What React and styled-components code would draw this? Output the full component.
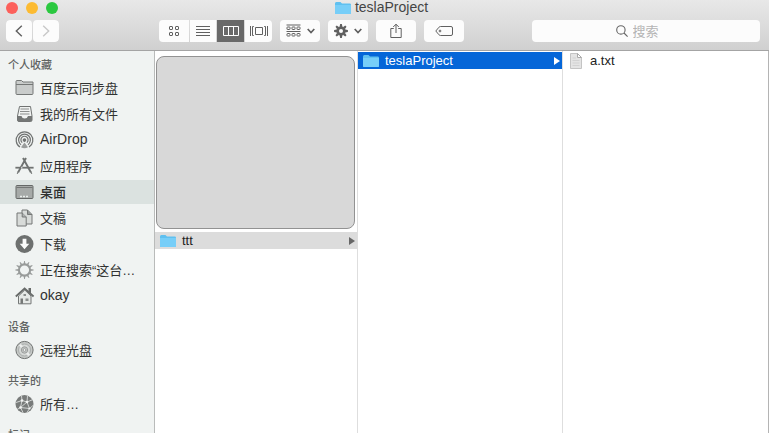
import React, { useState } from 'react'
import styled, { createGlobalStyle, css } from 'styled-components'

const GlobalStyle = createGlobalStyle`
  * {
    box-sizing: border-box;
  }

  body {
    margin: 0;
    overflow: hidden;
    font-family: 'Liberation Sans', 'Noto Sans CJK SC', sans-serif;
    font-size: 13px;
    color: #222;
  }

  button, input {
    font-family: inherit;
  }
`

const Window = styled.div`
  display: flex;
  flex-direction: column;
  height: 100vh;
  background: white;
`

const Header = styled.header`
  flex: none;
  background: linear-gradient(#e8e8e8, #d0d0d0);
  border-bottom: 1px solid #a4a4a4;
`

const TitleBar = styled.div`
  display: grid;
  grid-template-columns: 1fr auto 1fr;
  align-items: center;
  height: 15px;
  padding: 0 12px 0 6px;
`

const Lights = styled.div`
  display: flex;
  gap: 8px;
`

const Light = styled.button`
  width: 12px;
  height: 12px;
  padding: 0;
  border: none;
  border-radius: 50%;
  background: ${(props) => props.$color};
`

const Title = styled.h1`
  display: flex;
  align-items: center;
  gap: 4px;
  margin: 0;
  font-size: 14px;
  font-weight: 400;
  line-height: 15px;
  color: #444;
`

const Toolbar = styled.div`
  display: flex;
  align-items: center;
  gap: 8px;
  padding: 5px 9px 8px 6px;
`

const ButtonGroup = styled.div`
  display: flex;
  gap: 1px;
  margin-right: ${(props) => (props.$spaced ? 92 : 0)}px;
  border-radius: 4px;
  overflow: hidden;
`

const ToolButton = styled.button`
  display: flex;
  align-items: center;
  justify-content: center;
  gap: 6px;
  width: ${(props) => props.$width}px;
  height: 22px;
  padding: 0;
  border: none;
  border-radius: ${(props) => (props.$flat ? 0 : 4)}px;
  background: ${(props) => (props.$active ? '#696969' : '#fcfcfc')};
  color: ${(props) => (props.$active ? '#fff' : '#606060')};

  &:disabled {
    color: #c8c8c8;
  }
`

const SearchBox = styled.label`
  display: flex;
  align-items: center;
  justify-content: center;
  gap: 5px;
  flex: 1;
  height: 22px;
  margin-left: 60px;
  border-radius: 4px;
  background: #fcfcfc;
  color: #666;
`

const SearchInput = styled.input`
  width: 44px;
  padding: 0;
  border: none;
  outline: none;
  background: none;
  font-size: 13px;

  &::placeholder {
    color: #b4b4b4;
    opacity: 1;
  }
`

const Body = styled.div`
  display: flex;
  flex: 1;
  min-height: 0;
`

const Sidebar = styled.nav`
  flex: none;
  width: 155px;
  padding-top: 5px;
  overflow: hidden;
  background: #f0f3f2;
  border-right: 1px solid #b9bbba;
`

const Section = styled.section`
  margin-bottom: 10px;
`

const SectionTitle = styled.h2`
  margin: 0;
  padding-left: 8px;
  font-size: 11px;
  font-weight: 500;
  line-height: 18px;
  color: #606362;
`

const SideItem = styled.a`
  display: flex;
  align-items: center;
  gap: 5px;
  height: 24px;
  margin: 2px 0;
  padding-left: 15px;
  font-size: ${(props) => (props.$latin ? 14 : 13)}px;
  font-weight: ${(props) => (props.$selected ? 500 : 400)};
  color: #303231;
  text-decoration: none;
  white-space: nowrap;
  background: ${(props) => (props.$selected ? '#dbe2e0' : 'transparent')};

  svg {
    flex: none;
  }
`

const SideLabel = styled.span`
  padding-bottom: 2px;
`

const Columns = styled.main`
  display: grid;
  grid-template-columns: 203fr 205fr 206fr;
  flex: 1;
`

const Column = styled.div`
  padding-top: 1px;
  border-right: 1px solid ${(props) => (props.$last ? '#b4b4b4' : '#dedede')};
`

const Placeholder = styled.div`
  height: 173px;
  margin: 4px 2px 3px 1px;
  border: 1px solid #929292;
  border-radius: 8px;
  background: #d8d8d8;
`

const highlights = {
  active: css`
    background: #0566d8;
    color: white;
  `,
  inactive: css`
    background: #dcdcdc;
  `
}

const FileRow = styled.a`
  display: flex;
  align-items: center;
  gap: 6px;
  height: 17px;
  padding: 0 2px 0 5px;
  color: #222;
  text-decoration: none;
  ${(props) => highlights[props.$highlight]}
`

const FileName = styled.span`
  flex: 1;
`

const Arrow = styled.svg`
  color: ${(props) => (props.$light ? '#fff' : '#666')};
`

function FolderIcon() {
  return (
    <svg width="16" height="14" viewBox="0 0 16 14">
      <path d="M0 2.5Q0 1 1.3 1H5.5L7 2.5H14.8Q16 2.5 16 3.7V12Q16 13 15 13H1Q0 13 0 12Z" fill="#5fc0f0" />
      <path d="M0 4H16V12Q16 13 15 13H1Q0 13 0 12Z" fill="#77cef8" />
    </svg>
  )
}

function FileIcon() {
  return (
    <svg width="16" height="16" viewBox="0 0 16 16">
      <path d="M2.5.5H9.5L13.5 4.5V15.5H2.5Z" fill="#e4e4e4" stroke="#c4c4c4" />
      <path d="M9.5.5V4.5H13.5Z" fill="#fff" stroke="#aaa" />
      <path d="M4.5 5H8M4.5 7.5H11.5M4.5 10H11.5M4.5 12.5H11.5" stroke="#d2d2d2" />
    </svg>
  )
}

function Chevron() {
  return (
    <svg width="8" height="6" viewBox="0 0 8 6" fill="none" stroke="currentColor" strokeWidth="1.7">
      <path d="M.7 1L4 4.5L7.3 1" />
    </svg>
  )
}

const toothAngles = (count) => Array.from({ length: count }, (_, i) => (i * 360) / count)

function NavIcon({ forward }) {
  return (
    <svg width="8" height="12" viewBox="0 0 8 12" fill="none" stroke="currentColor" strokeWidth="1.4">
      <path d={forward ? 'M1.2.7L6.7 6L1.2 11.3' : 'M6.8.7L1.3 6L6.8 11.3'} />
    </svg>
  )
}

function GridIcon() {
  return (
    <svg width="12" height="12" viewBox="0 0 12 12" fill="none" stroke="currentColor">
      <rect x="1.5" y="1.5" width="3" height="3" rx=".5" />
      <rect x="7.5" y="1.5" width="3" height="3" rx=".5" />
      <rect x="1.5" y="7.5" width="3" height="3" rx=".5" />
      <rect x="7.5" y="7.5" width="3" height="3" rx=".5" />
    </svg>
  )
}

function ListIcon() {
  return (
    <svg width="14" height="12" viewBox="0 0 14 12" stroke="currentColor">
      <path d="M0 1.5H14M0 4.5H14M0 7.5H14M0 10.5H14" />
    </svg>
  )
}

function ColumnsIcon() {
  return (
    <svg width="16" height="12" viewBox="0 0 16 12" fill="none" stroke="currentColor">
      <path d="M.5 1.5H15.5V10.5H.5ZM5.5 1.5V10.5M10.5 1.5V10.5" />
    </svg>
  )
}

function CoverIcon() {
  return (
    <svg width="18" height="12" viewBox="0 0 18 12" fill="none" stroke="currentColor">
      <path d="M5.5 2.5H12.5V9.5H5.5ZM.5 1V11M3.8 1.5H2.5V10.5H3.8M17.5 1V11M14.2 1.5H15.5V10.5H14.2" />
    </svg>
  )
}

function ArrangeIcon() {
  return (
    <svg width="15" height="14" viewBox="0 0 15 14" fill="none" stroke="currentColor">
      <path d="M.5 1H14.5M.5 7.5H14.5" />
      {[1, 6, 11].map((x) => (
        <g key={x}>
          <rect x={x} y="3" width="3" height="2.5" rx=".5" />
          <rect x={x} y="9.5" width="3" height="2.5" rx=".5" />
        </g>
      ))}
    </svg>
  )
}

function GearIcon() {
  return (
    <svg width="14" height="14" viewBox="0 0 14 14">
      {toothAngles(8).map((angle) => (
        <path key={angle} d="M5.6 3L6.1.1H7.9L8.4 3Z" fill="currentColor" transform={`rotate(${angle} 7 7)`} />
      ))}
      <circle cx="7" cy="7" r="3.3" fill="none" stroke="currentColor" strokeWidth="2.6" />
    </svg>
  )
}

function ShareIcon() {
  return (
    <svg width="12" height="16" viewBox="0 0 12 16" fill="none" stroke="currentColor">
      <path d="M3.8 5.5H.8V14.5H11.2V5.5H8.2M6 10V1.2M3.2 4L6 1.2L8.8 4" />
    </svg>
  )
}

function TagIcon() {
  return (
    <svg width="18" height="12" viewBox="0 0 18 12" fill="none" stroke="currentColor">
      <path d="M5.5 1.5H16Q17.5 1.5 17.5 3V9Q17.5 10.5 16 10.5H5.5Q4.7 10.5 4 9.8L.8 6L4 2.2Q4.7 1.5 5.5 1.5Z" />
      <circle cx="5" cy="6" r=".9" />
    </svg>
  )
}

function SearchIcon() {
  return (
    <svg width="12" height="12" viewBox="0 0 12 12" fill="none" stroke="currentColor" strokeWidth="1.1">
      <circle cx="4.9" cy="4.9" r="4.2" />
      <path d="M8 8L11.6 11.6" />
    </svg>
  )
}

const sideIcons = {
  folder: (
    <g fill="#c9cccb" stroke="#747776">
      <path d="M1 15V3Q1 2 2 2H6.5L8 3.5H18V15Q18 16 17 16H2Q1 16 1 15Z" />
      <path d="M1 6H18" />
    </g>
  ),
  allFiles: (
    <g>
      <path d="M4.5 2H15.5L17 11.5V15.5Q17 17 15.5 17H4Q2.5 17 2.5 15.5V11.5Z" fill="#f1f3f2" stroke="#707372" />
      <path d="M5.5 4.5H14M5 7H14.5M5 9.5H14.5" stroke="#8b8e8d" />
      <path d="M2.5 11.5H6.5Q7 14 9.7 14T13 11.5H17V15.5Q17 17 15.5 17H4Q2.5 17 2.5 15.5Z" fill="#747776" />
    </g>
  ),
  airdrop: (
    <g fill="none" stroke="#707372" strokeWidth="1.2">
      <path d="M5 16.6A8.3 8.3 0 1 1 14 16.6" />
      <path d="M6 14.2A5.9 5.9 0 1 1 13 14.2" />
      <path d="M7.2 12.1A3.6 3.6 0 1 1 11.8 12.1" />
      <circle cx="9.5" cy="9.6" r="1.2" fill="#707372" />
      <path d="M9.5 12L6 16.8Q9.5 18.6 13 16.8Z" fill="#9a9d9c" stroke="none" />
    </g>
  ),
  apps: (
    <g fill="none" stroke="#707372" strokeWidth="1.9">
      <path d="M8 1.5L15.8 15.7M11 1.5L3.2 15.7" />
      <path d="M.4 11.2H18.6" strokeWidth="1.8" />
      <path d="M2.2 17.2L3.4 15M16.8 17.2L15.6 15" strokeWidth="1.2" />
      <path d="M6.8 12.1V10.3" stroke="#f0f3f2" strokeWidth="1" />
    </g>
  ),
  desktop: (
    <g>
      <rect x="1" y="3" width="17" height="13" rx="1" fill="#a6aaa8" stroke="#656867" />
      <path d="M1.5 5H17.5" stroke="#747776" />
      <path d="M5 14H14" stroke="#e9eeeb" strokeWidth="1.4" strokeDasharray="2 1" />
    </g>
  ),
  documents: (
    <g fill="#d8dbd9" stroke="#747776">
      <path d="M7 1.5H12.5L17 6V15.5H7Z" />
      <path d="M12.5 1.5V6H17" fill="#969998" />
      <path d="M2 4.5H7.2L11.2 8.5V17.5H2Z" />
      <path d="M7.2 4.5V8.5H11.2" fill="#b1b4b3" />
    </g>
  ),
  downloads: (
    <g>
      <circle cx="9.5" cy="9.5" r="9" fill="#6d706f" />
      <path d="M7.6 4.3H11.4V9.2H14.3L9.5 14.8L4.7 9.2H7.6Z" fill="#fafbfa" />
    </g>
  ),
  gear: (
    <g stroke="#989b9a" fill="none">
      <circle cx="9.5" cy="9.5" r="5.6" strokeWidth="2.1" />
      {toothAngles(12).map((angle) => (
        <path key={angle} d="M8.5 3.8L9.1.4H9.9L10.5 3.8Z" fill="#989b9a" stroke="none" transform={`rotate(${angle} 9.5 9.5)`} />
      ))}
    </g>
  ),
  home: (
    <g>
      <path d="M3.5 9.5L9.8 3.5L16 9.5V17.3H3.5Z" fill="#e5e8e6" stroke="#747776" />
      <path d="M13.5 1.5H16V7L13.5 5Z" fill="#686b6a" />
      <path d="M.8 10L9.6 2L18.6 10" fill="none" stroke="#686b6a" strokeWidth="1.8" />
      <path d="M5.5 12H8V17.3H5.5Z" fill="#747776" />
      <path d="M8.5 7.5H11V9.5H8.5ZM10.5 12H13.5V14.5H10.5Z" fill="#8a8d8c" />
    </g>
  ),
  disc: (
    <g fill="#c5c8c6" stroke="#858887">
      <circle cx="9.5" cy="9.5" r="8.6" stroke="#707372" />
      <circle cx="9.5" cy="9.5" r="6" fill="#d6d9d7" stroke="#aaaead" />
      <path d="M9.5 9.5L3.8 5.2L6 3.2ZM9.5 9.5L15.2 13.8L13 15.8Z" fill="#eceeed" stroke="none" />
      <circle cx="9.5" cy="9.5" r="3.2" stroke="#9b9e9d" />
      <circle cx="9.5" cy="9.5" r="1.4" fill="#f4f6f5" stroke="#9b9e9d" />
    </g>
  ),
  network: (
    <g>
      <circle cx="9.5" cy="9.5" r="9" fill="#787b7a" />
      <path d="M1 8L7 6L12 7.5L18 5M7 6L5.5 13L12 7.5L14.5 14L5.5 13L2 15M7 6L6.5 1.5M12 7.5L12.5 1.5M5.5 13L8 18M14.5 14L12 18M14.5 14L18 11" fill="none" stroke="#d9dcdb" strokeWidth=".9" />
      <g fill="#f2f4f3">
        <circle cx="7" cy="6" r="1.3" />
        <circle cx="12" cy="7.5" r="1.3" />
        <circle cx="5.5" cy="13" r="1.3" />
        <circle cx="14.5" cy="14" r="1.1" />
      </g>
    </g>
  )
}

function SideIcon({ name }) {
  return (
    <svg width="20" height="20" viewBox="0 -.5 20 20">
      {sideIcons[name]}
    </svg>
  )
}

const sections = [
  {
    title: '个人收藏',
    items: [
      { name: '百度云同步盘', icon: 'folder' },
      { name: '我的所有文件', icon: 'allFiles' },
      { name: 'AirDrop', icon: 'airdrop', latin: true },
      { name: '应用程序', icon: 'apps' },
      { name: '桌面', icon: 'desktop' },
      { name: '文稿', icon: 'documents' },
      { name: '下载', icon: 'downloads' },
      { name: '正在搜索“这台…', icon: 'gear' },
      { name: 'okay', icon: 'home', latin: true }
    ]
  },
  { title: '设备', items: [{ name: '远程光盘', icon: 'disc' }] },
  { title: '共享的', items: [{ name: '所有…', icon: 'network' }] },
  { title: '标记', items: [] }
]

const views = [
  { id: 'icons', label: '图标', width: 30, Icon: GridIcon },
  { id: 'list', label: '列表', width: 26, Icon: ListIcon },
  { id: 'columns', label: '分栏', width: 27, Icon: ColumnsIcon },
  { id: 'cover', label: 'Cover Flow', width: 27, Icon: CoverIcon }
]

function Entry({ name, folder, highlight }) {
  return (
    <FileRow href="#" $highlight={highlight}>
      {folder ? <FolderIcon /> : <FileIcon />}
      <FileName>{name}</FileName>
      {folder && (
        <Arrow width="6" height="8" viewBox="0 0 6 8" $light={highlight === 'active'}>
          <path d="M0 0L6 4L0 8Z" fill="currentColor" />
        </Arrow>
      )}
    </FileRow>
  )
}

function App() {
  const [view, setView] = useState('columns')
  const [selected, setSelected] = useState('桌面')
  const [query, setQuery] = useState('')

  return (
    <Window>
      <GlobalStyle />
      <Header>
        <TitleBar>
          <Lights>
            <Light $color="#fc605b" aria-label="关闭" />
            <Light $color="#fcbb32" aria-label="最小化" />
            <Light $color="#2bc840" aria-label="缩放" />
          </Lights>
          <Title>
            <FolderIcon />
            teslaProject
          </Title>
        </TitleBar>
        <Toolbar>
          <ButtonGroup $spaced>
            <ToolButton $width={26} aria-label="后退">
              <NavIcon />
            </ToolButton>
            <ToolButton $width={26} aria-label="前进" disabled>
              <NavIcon forward />
            </ToolButton>
          </ButtonGroup>
          <ButtonGroup>
            {views.map(({ id, label, width, Icon }) => (
              <ToolButton
                key={id}
                $flat
                $width={width}
                $active={view === id}
                aria-label={label}
                onClick={() => setView(id)}
              >
                <Icon />
              </ToolButton>
            ))}
          </ButtonGroup>
          <ToolButton $width={40} aria-label="排列">
            <ArrangeIcon />
            <Chevron />
          </ToolButton>
          <ToolButton $width={40} aria-label="操作">
            <GearIcon />
            <Chevron />
          </ToolButton>
          <ToolButton $width={40} aria-label="共享">
            <ShareIcon />
          </ToolButton>
          <ToolButton $width={40} aria-label="标记">
            <TagIcon />
          </ToolButton>
          <SearchBox>
            <SearchIcon />
            <SearchInput
              aria-label="搜索"
              placeholder="搜索"
              value={query}
              onChange={(e) => setQuery(e.target.value)}
            />
          </SearchBox>
        </Toolbar>
      </Header>

      <Body>
        <Sidebar>
          {sections.map((section) => (
            <Section key={section.title}>
              <SectionTitle>{section.title}</SectionTitle>
              {section.items.map((item) => (
                <SideItem
                  key={item.name}
                  href="#"
                  $latin={item.latin}
                  $selected={selected === item.name}
                  onClick={() => setSelected(item.name)}
                >
                  <SideIcon name={item.icon} />
                  <SideLabel>{item.name}</SideLabel>
                </SideItem>
              ))}
            </Section>
          ))}
        </Sidebar>
        <Columns>
          <Column>
            <Placeholder />
            <Entry name="ttt" folder highlight="inactive" />
          </Column>
          <Column>
            <Entry name="teslaProject" folder highlight="active" />
          </Column>
          <Column $last>
            <Entry name="a.txt" />
          </Column>
        </Columns>
      </Body>
    </Window>
  )
}

export default App
